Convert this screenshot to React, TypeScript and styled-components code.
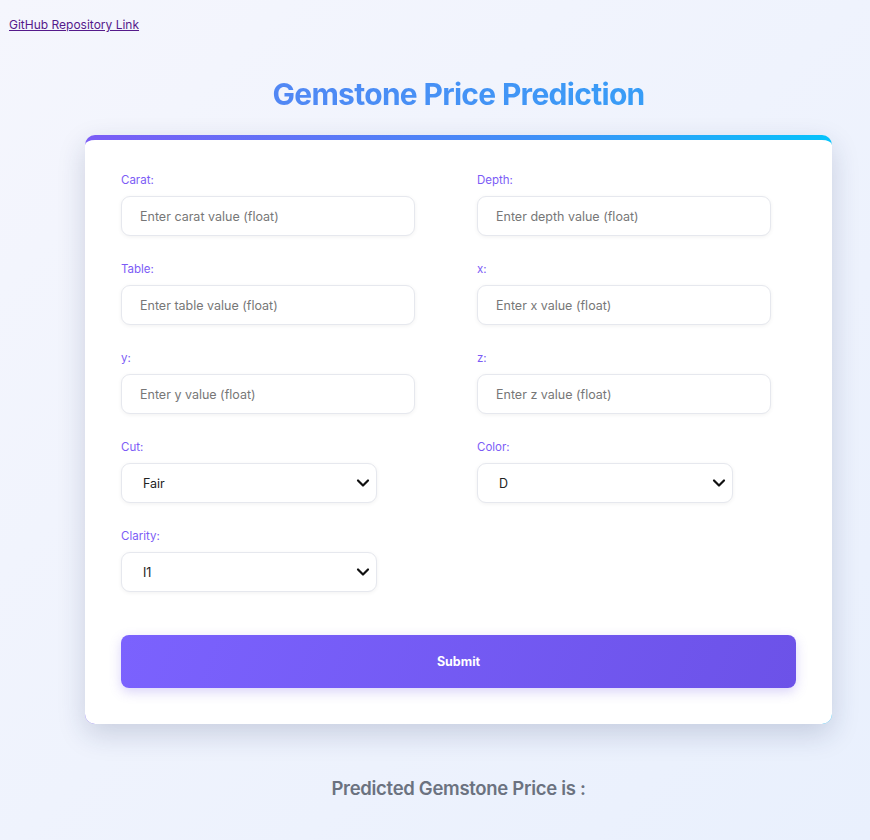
import React from "react";
import styled, { createGlobalStyle } from "styled-components";

const Global = createGlobalStyle`
  html {
    min-height: 100%;
    background: linear-gradient(135deg, #f5f6fd 0%, #e9f0fd 100%);
    background-attachment: fixed;
  }
  body {
    margin: 8px;
    font-family: Inter, "Noto Sans", sans-serif;
    background: transparent;
  }
`;

const TopLink = styled.a`
  display: inline-block;
  margin-top: 9px;
  margin-left: 1px;
  font-size: 12px;
  line-height: 15px;
  color: #551a8b;
  text-decoration: underline;
  font-family: Inter, sans-serif;
`;

const Main = styled.main`
  width: 747px;
  margin-left: 77px;
  display: flex;
  flex-direction: column;
`;

const Title = styled.h1`
  margin: 41px 0 21px;
  text-align: center;
  font-size: 30px;
  line-height: 40px;
  font-weight: 700;
  letter-spacing: -0.7px;
  background: linear-gradient(90deg, #5f7cf3 0%, #2aa8f8 100%);
  -webkit-background-clip: text;
  background-clip: text;
  color: transparent;
`;

const Card = styled.form`
  border-radius: 10px;
  border-top: 5px solid transparent;
  background-image: linear-gradient(#fff, #fff), linear-gradient(90deg, #7b5cf6 0%, #3f8ff7 60%, #05c3fb 100%);
  background-origin: border-box;
  background-clip: padding-box, border-box;
  box-shadow: 0 10px 28px rgba(30, 45, 90, 0.18);
  padding: 33px 36px 36px;
`;

const Grid = styled.div`
  display: grid;
  grid-template-columns: 1fr 1fr;
  column-gap: 37px;
  row-gap: 26px;
`;

const Field = styled.div`
  display: flex;
  flex-direction: column;
  gap: 9px;
`;

const Label = styled.label`
  font-size: 11.5px;
  line-height: 14px;
  font-weight: 400;
  color: #7c5cf6;
`;

const Input = styled.input`
  box-sizing: border-box;
  width: 294px;
  height: 40px;
  border: 1px solid #e6e8ee;
  border-radius: 9px;
  padding: 0 18px;
  font-family: Inter, sans-serif;
  font-size: 12.5px;
  color: #333;
  background: #fff;
  box-shadow: 0 1px 4px rgba(0, 0, 0, 0.06);
  outline: none;
  &::placeholder { color: #777; }
`;

const SelectWrap = styled.div`
  position: relative;
  width: 256px;
`;

const Select = styled.select`
  box-sizing: border-box;
  width: 100%;
  height: 40px;
  appearance: none;
  -webkit-appearance: none;
  border: 1px solid #e6e8ee;
  border-radius: 9px;
  padding: 0 21px;
  font-family: Inter, sans-serif;
  font-size: 12.5px;
  color: #222;
  background: #fff;
  box-shadow: 0 1px 4px rgba(0, 0, 0, 0.06);
  outline: none;
`;

const Chevron = styled.svg`
  position: absolute;
  right: 7px;
  top: 15px;
  pointer-events: none;
`;

const Submit = styled.button`
  margin-top: 43px;
  width: 100%;
  height: 53px;
  border: none;
  border-radius: 8px;
  background: linear-gradient(110deg, #7b62fe 0%, #6c52e8 100%);
  box-shadow: 0 4px 12px rgba(108, 82, 232, 0.25);
  color: #fff;
  font-family: Inter, sans-serif;
  font-size: 12.5px;
  font-weight: 700;
  cursor: pointer;
`;

const Result = styled.h2`
  margin: 52px 0 0;
  text-align: center;
  font-size: 18.5px;
  line-height: 24px;
  font-weight: 600;
  color: #6b7280;
  letter-spacing: -0.3px;
`;

const inputs = [
  ["Carat", "Enter carat value (float)"],
  ["Depth", "Enter depth value (float)"],
  ["Table", "Enter table value (float)"],
  ["x", "Enter x value (float)"],
  ["y", "Enter y value (float)"],
  ["z", "Enter z value (float)"],
];

const selects: [string, string[]][] = [
  ["Cut", ["Fair", "Good", "Very Good", "Premium", "Ideal"]],
  ["Color", ["D", "E", "F", "G", "H", "I", "J"]],
  ["Clarity", ["I1", "SI2", "SI1", "VS2", "VS1", "VVS2", "VVS1", "IF"]],
];

export default function App() {
  return (
    <>
      <Global />
      <TopLink href="#">GitHub Repository Link</TopLink>
      <Main>
        <Title>Gemstone Price Prediction</Title>
        <Card onSubmit={(e) => e.preventDefault()}>
          <Grid>
            {inputs.map(([l, p]) => (
              <Field key={l}>
                <Label>{l}:</Label>
                <Input placeholder={p} />
              </Field>
            ))}
            {selects.map(([l, opts]) => (
              <Field key={l}>
                <Label>{l}:</Label>
                <SelectWrap>
                  <Select defaultValue={opts[0]}>
                    {opts.map((o) => (
                      <option key={o}>{o}</option>
                    ))}
                  </Select>
                  <Chevron width="14" height="10" viewBox="0 0 14 10">
                    <path d="M2 2.5 L7 7.5 L12 2.5" fill="none" stroke="#111" strokeWidth="2.2" strokeLinecap="round" strokeLinejoin="round" />
                  </Chevron>
                </SelectWrap>
              </Field>
            ))}
          </Grid>
          <Submit type="submit">Submit</Submit>
        </Card>
        <Result>Predicted Gemstone Price is :</Result>
      </Main>
    </>
  );
}
